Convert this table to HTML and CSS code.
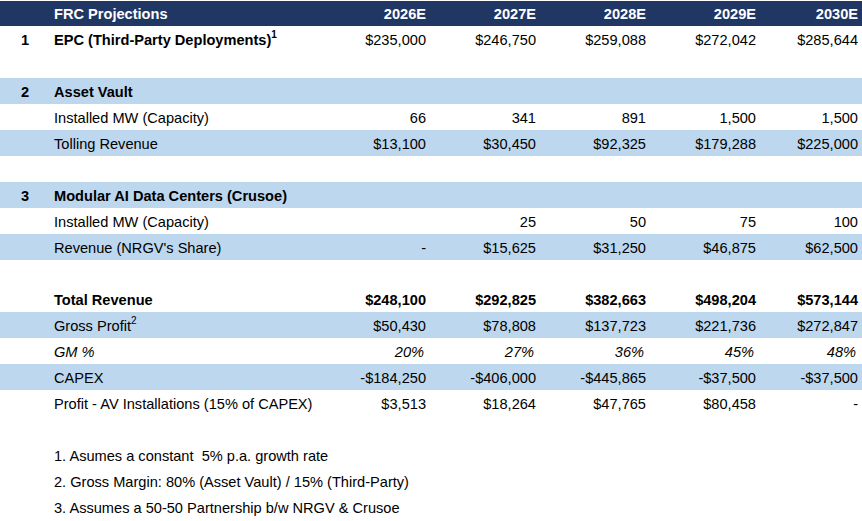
FILE: index.html
```html
<!DOCTYPE html>
<html>
<head>
<meta charset="utf-8">
<link rel="stylesheet" href="styles.css">
</head>
<body>
<div class="sheet">
  <div class="row head">
    <div class="num"></div><div class="label">FRC Projections</div>
    <div class="val">2026E</div><div class="val">2027E</div><div class="val">2028E</div><div class="val">2029E</div><div class="val">2030E</div>
  </div>
  <div class="row bold-label">
    <div class="num">1</div><div class="label">EPC (Third-Party Deployments)<sup>1</sup></div>
    <div class="val">$235,000</div><div class="val">$246,750</div><div class="val">$259,088</div><div class="val">$272,042</div><div class="val">$285,644</div>
  </div>
  <div class="row blank"></div>
  <div class="row band bold-label">
    <div class="num">2</div><div class="label">Asset Vault</div>
    <div class="val"></div><div class="val"></div><div class="val"></div><div class="val"></div><div class="val"></div>
  </div>
  <div class="row">
    <div class="num"></div><div class="label">Installed MW (Capacity)</div>
    <div class="val">66</div><div class="val">341</div><div class="val">891</div><div class="val">1,500</div><div class="val">1,500</div>
  </div>
  <div class="row band">
    <div class="num"></div><div class="label">Tolling Revenue</div>
    <div class="val">$13,100</div><div class="val">$30,450</div><div class="val">$92,325</div><div class="val">$179,288</div><div class="val">$225,000</div>
  </div>
  <div class="row blank"></div>
  <div class="row band bold-label">
    <div class="num">3</div><div class="label">Modular AI Data Centers (Crusoe)</div>
    <div class="val"></div><div class="val"></div><div class="val"></div><div class="val"></div><div class="val"></div>
  </div>
  <div class="row">
    <div class="num"></div><div class="label">Installed MW (Capacity)</div>
    <div class="val"></div><div class="val">25</div><div class="val">50</div><div class="val">75</div><div class="val">100</div>
  </div>
  <div class="row band">
    <div class="num"></div><div class="label">Revenue (NRGV's Share)</div>
    <div class="val">-</div><div class="val">$15,625</div><div class="val">$31,250</div><div class="val">$46,875</div><div class="val">$62,500</div>
  </div>
  <div class="row blank"></div>
  <div class="row total">
    <div class="num"></div><div class="label">Total Revenue</div>
    <div class="val">$248,100</div><div class="val">$292,825</div><div class="val">$382,663</div><div class="val">$498,204</div><div class="val">$573,144</div>
  </div>
  <div class="row band">
    <div class="num"></div><div class="label">Gross Profit<sup>2</sup></div>
    <div class="val">$50,430</div><div class="val">$78,808</div><div class="val">$137,723</div><div class="val">$221,736</div><div class="val">$272,847</div>
  </div>
  <div class="row italic">
    <div class="num"></div><div class="label">GM %</div>
    <div class="val">20%</div><div class="val">27%</div><div class="val">36%</div><div class="val">45%</div><div class="val">48%</div>
  </div>
  <div class="row band">
    <div class="num"></div><div class="label">CAPEX</div>
    <div class="val">-$184,250</div><div class="val">-$406,000</div><div class="val">-$445,865</div><div class="val">-$37,500</div><div class="val">-$37,500</div>
  </div>
  <div class="row">
    <div class="num"></div><div class="label">Profit - AV Installations (15% of CAPEX)</div>
    <div class="val">$3,513</div><div class="val">$18,264</div><div class="val">$47,765</div><div class="val">$80,458</div><div class="val">-</div>
  </div>
  <div class="row blank"></div>
  <div class="notes">
    <div class="note">1. Asumes a constant&nbsp; 5% p.a. growth rate</div>
    <div class="note">2. Gross Margin: 80% (Asset Vault) / 15% (Third-Party)</div>
    <div class="note">3. Assumes a 50-50 Partnership b/w NRGV &amp; Crusoe</div>
  </div>
</div>
</body>
</html>
```
FILE: styles.css
```css
html, body {
  margin: 0;
  padding: 0;
  background: #ffffff;
}
body {
  font-family: "Liberation Sans", Arial, sans-serif;
  font-size: 14.6px;
  color: #000000;
}
.sheet {
  width: 862px;
  padding-top: 1px;
}
.row {
  display: grid;
  grid-template-columns: 50px 270px 110px 110px 110px 110px 102px;
  height: 26px;
  line-height: 28px;
  white-space: nowrap;
}
.row.head {
  height: 25px;
  line-height: 27px;
  background: #203764;
  color: #ffffff;
  font-weight: bold;
}
.band {
  background: #bdd7ee;
}
.num {
  text-align: center;
  font-weight: bold;
}
.label {
  padding-left: 4px;
}
.val {
  text-align: right;
  padding-right: 4px;
}
.bold-label .label {
  font-weight: bold;
}
.total {
  font-weight: bold;
}
.italic {
  font-style: italic;
}
.italic .val {
  padding-right: 6px;
}
sup {
  font-size: 10px;
  line-height: 0;
  vertical-align: 7px;
}
.notes {
  padding-left: 54px;
}
.note {
  height: 26px;
  line-height: 28px;
}
```
